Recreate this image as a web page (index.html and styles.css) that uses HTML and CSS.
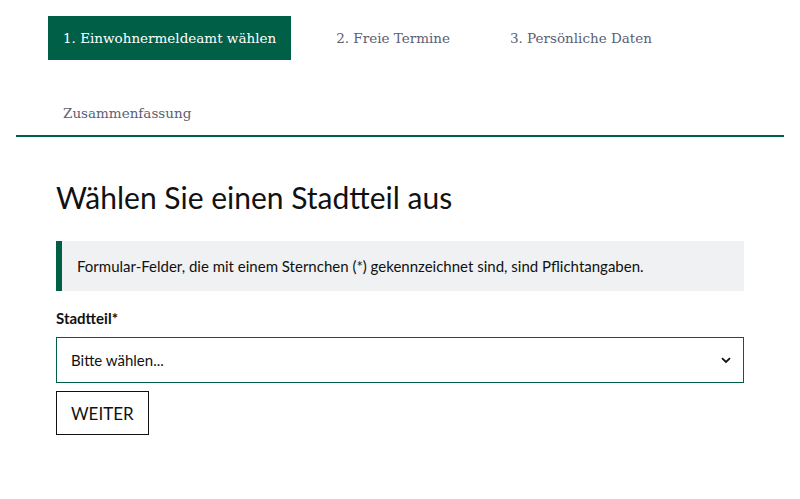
FILE: index.html
```html
<!DOCTYPE html>
<html lang="de">
<head>
<meta charset="utf-8">
<title>Stadtteil wählen</title>
<link rel="stylesheet" href="styles.css">
</head>
<body>
<nav class="steps">
  <ol class="step-list">
    <li class="step active">1. Einwohnermeldeamt wählen</li>
    <li class="step">2. Freie Termine</li>
    <li class="step">3. Persönliche Daten</li>
    <li class="step">Zusammenfassung</li>
  </ol>
</nav>
<main class="content">
  <h1 class="title">Wählen Sie einen Stadtteil aus</h1>
  <div class="notice">Formular-Felder, die mit einem Sternchen (*) gekennzeichnet sind, sind Pflichtangaben.</div>
  <form class="form">
    <label class="label" for="district">Stadtteil*</label>
    <div class="select">
      <span class="select-value">Bitte wählen...</span>
      <svg class="chevron" width="10" height="7" viewBox="0 0 10 7"><path d="M1 1.2 L5 5 L9 1.2" fill="none" stroke="#111" stroke-width="1.8"/></svg>
    </div>
    <button type="button" class="btn">WEITER</button>
  </form>
</main>
</body>
</html>
```

FILE: styles.css
```css
html, body {
  margin: 0;
  padding: 0;
  background: #fff;
}
body {
  font-family: Lato, "Noto Sans", sans-serif;
  color: #111;
}
.steps {
  margin: 16px 16px 0;
  border-bottom: 2px solid #005f47;
}
.step-list {
  list-style: none;
  margin: 0;
  padding: 0 0 0 32px;
  display: flex;
  flex-wrap: wrap;
  column-gap: 30px;
  row-gap: 31px;
}
.step {
  font-family: "DejaVu Serif", serif;
  font-size: 13.5px;
  line-height: 44px;
  padding: 0 15px;
  color: #5c6072;
}
.step.active {
  background: #005f47;
  color: #fff;
}
.content {
  padding: 0 56px;
}
.title {
  font-weight: 400;
  font-size: 30px;
  margin: 40px 0 24px 0;
  line-height: 40px;
}
.notice {
  background: #f0f1f2;
  border-left: 6px solid #005f47;
  padding: 0 15px;
  height: 50px;
  display: flex;
  align-items: center;
  font-size: 15px;
}
.form {
  display: flex;
  flex-direction: column;
  align-items: flex-start;
}
.label {
  font-weight: 700;
  font-size: 15px;
  margin-top: 17px;
  line-height: 20px;
}
.select {
  margin-top: 9px;
  align-self: stretch;
  height: 44px;
  border: 1px solid #005f47;
  display: flex;
  align-items: center;
  justify-content: space-between;
  padding: 0 12px 0 14px;
  font-size: 15px;
}
.btn {
  margin-top: 8px;
  background: #fff;
  border: 1px solid #111;
  font-family: Lato, "Noto Sans", sans-serif;
  font-size: 17px;
  color: #111;
  height: 44px;
  padding: 0 14px;
}
```
